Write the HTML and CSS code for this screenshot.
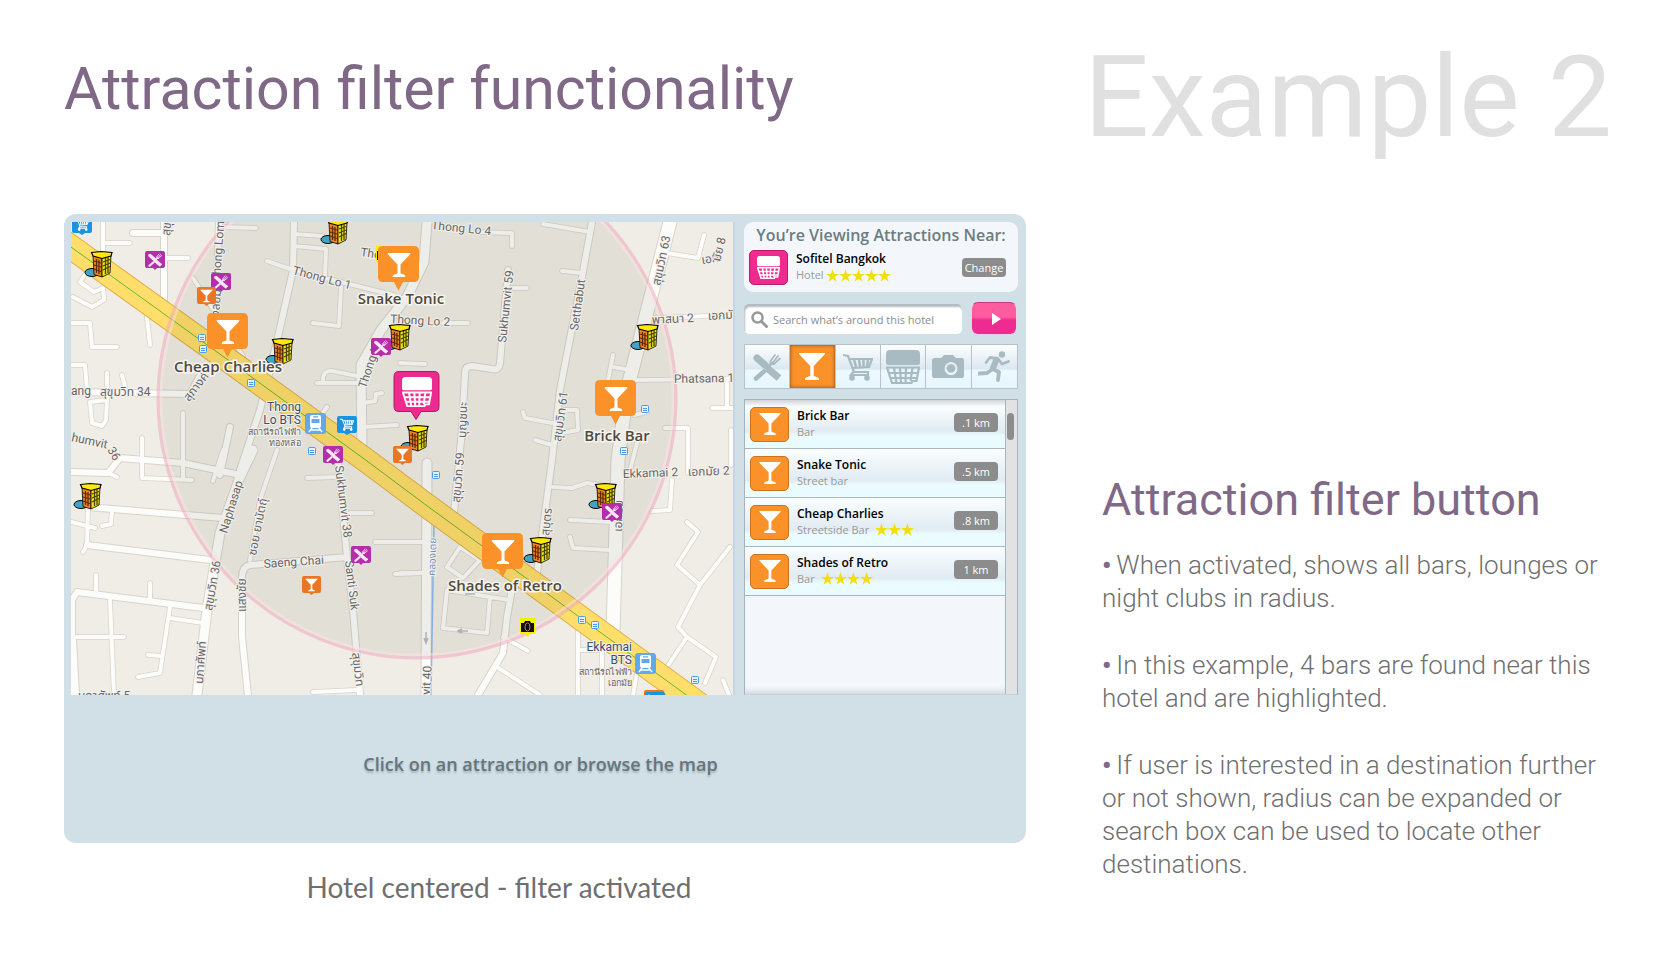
FILE: index.html
```html
<!DOCTYPE html>
<html lang="en">
<head>
<meta charset="utf-8">
<title>Attraction filter functionality</title>
<link rel="stylesheet" href="styles.css">
</head>
<body>
<svg class="defs" aria-hidden="true">
  <defs>
    <symbol id="glass" viewBox="0 0 26 27"><path fill="currentColor" d="M0 0h26v1L14.700 13v9.500c0 1.200 5.300 1.500 5.300 3.500v1H6v-1c0-2 5.300-2.300 5.300-3.500V13L0 1z"/></symbol>
    <symbol id="cutlery" viewBox="0 0 28 28"><g fill="none" stroke="currentColor" stroke-linecap="round"><path stroke-width="7" d="M4 5l8 7"/><path stroke-width="5" d="M10 11l5 4"/><path stroke-width="7" stroke-linecap="butt" d="M14 15l12 10"/><path stroke-width="4.500" d="M3 25.500l8-7"/><path stroke-width="3" d="M15 14l4-4"/><path stroke-width="1.700" d="M17.500 8l4.500-6M20 9.500l5-6.500M21 11l6-5.500M17.500 8q-1 4 3.500 3"/></g></symbol>
    <symbol id="cart" viewBox="0 0 30 28"><g fill="none" stroke="currentColor" stroke-width="2.200"><path d="M0 2l5 1 6 16h14v3H8l3-4"/><path d="M7 6h22l-3 8-16 1"/><path stroke-width="2.500" d="M11 6l2 8M16 6l1 8M20.500 6v8M25 6l-1 8"/></g><circle cx="9" cy="25" r="2.800" fill="currentColor"/><circle cx="24" cy="25" r="2.800" fill="currentColor"/></symbol>
    <symbol id="basket" viewBox="0 0 34 34"><path fill="currentColor" d="M4 0h26q4 0 4 4v9q0 2-2 2H2q-2 0-2-2V4q0-4 4-4z"/><path fill="none" stroke="currentColor" stroke-width="2.200" d="M1 17.500h32l-2.500 13.500h-4l-1 2H6L1 17.500zM2 23h30M4 28h27M8 18l2.500 15M14 18l1 15M20 18l-.5 15M26.500 18l-2 13"/></symbol>
    <symbol id="camera" viewBox="0 0 32 24"><path fill="currentColor" fill-rule="evenodd" d="M3 3h6l3-3h9l3 3h6q2 0 2 2v16q0 2-2 2H2q-2 0-2-2V5q0-2 3-2zM19 7a6.500 6.500 0 1 0 .1 0z"/><circle cx="19" cy="13.500" r="4.300" fill="currentColor"/></symbol>
    <symbol id="runner" viewBox="0 0 32 31"><circle cx="24" cy="3.500" r="3.200" fill="currentColor"/><g fill="none" stroke="currentColor" stroke-linecap="round" stroke-linejoin="round"><path stroke-width="6" d="M18.500 8.500l-3.500 8.500"/><path stroke-width="2.800" d="M18 7.500l-6-1-4 5M21 9l3 4 6.500-2.500"/><path stroke-width="3.800" d="M14.500 18l6.500 3-1 8M14 18.500l-5 3.500-8 .5"/></g></symbol>
    <symbol id="star" viewBox="0 0 20 19"><path fill="#f0df0c" d="M10 0l2.400 7.200H20l-6.200 4.500 2.400 7.300L10 14.500 3.800 19l2.400-7.300L0 7.200h7.600z"/></symbol>
    <symbol id="lens" viewBox="0 0 17 17"><circle cx="6.500" cy="6.500" r="5" fill="none" stroke="#999" stroke-width="2.500"/><path d="M10.500 10.500l5 5" stroke="#999" stroke-width="3" stroke-linecap="round"/></symbol>

    <g id="pin-bar"><path fill="#fa9129" d="M5 0h31q5 0 5 5v26q0 5-5 5H25l-4.500 8.500L16 36H5q-5 0-5-5V5q0-5 5-5z"/><use href="#glass" x="9.500" y="7" width="23" height="24" color="#fff"/></g>
    <g id="mini-bar"><path fill="#e87624" d="M2 0h15q2 0 2 2v13q0 2-2 2h-5l-2.500 2L7 17H2q-2 0-2-2V2q0-2 2-2z"/><use href="#glass" x="3" y="2.500" width="13" height="13" color="#fff"/></g>
    <g id="mini-food"><path fill="#b32ea9" d="M2 0h16q2 0 2 2v13q0 2-2 2h-6l-2 2-2-2H2q-2 0-2-2V2q0-2 2-2z"/><use href="#cutlery" x="3" y="2" width="14" height="14" color="#fbe6f8"/></g>
    <g id="mini-shop"><path fill="#1a93e0" d="M2 0h16q2 0 2 2v13q0 2-2 2h-5l-3 2-3-2H2q-2 0-2-2V2q0-2 2-2z"/><use href="#cart" x="3" y="2" width="14" height="13" color="#fff"/></g>
    <g id="train"><rect width="21" height="21" rx="3" fill="#5fa9ec"/><path fill="#fff" fill-rule="evenodd" d="M7 2h7q2 0 2 2v9q0 2-2 2H7q-2 0-2-2V4q0-2 2-2zM6.500 6v4h8V6zM8 3.300v1.200h5V3.300z"/><path d="M7 15l-3 4M14 15l3 4M6 17h9" stroke="#fff" stroke-width="1.500"/></g>
    <g id="stop"><rect x=".5" y=".5" width="7" height="7" rx="1" fill="#e4f1fc" stroke="#4a9bea"/><path d="M2 3.500h4M2 5.500h4" stroke="#4a9bea"/></g>
    <g id="hotel"><ellipse cx="7" cy="21.500" rx="7" ry="4" fill="#3fa4c6" stroke="#000"/><path fill="#f08323" stroke="#000" stroke-width=".8" d="M8 4l9 3v19l-8-2.500z"/><path fill="#eee21a" stroke="#000" stroke-width=".8" d="M17 7l9-3-1 18-8 4z"/><path fill="#ffe810" stroke="#000" stroke-width="1.200" d="M6.500 1.500L16 .5l11 1-1 3.500-9 2.500L8 5z"/><path d="M9 10l7 2M9 14l7 2M9 18l7 2.500M11.500 8v14M14 9v14" stroke="#5c2c05" stroke-width="1.300"/><path d="M18 11l7-2.500M18 15l7-3M18 19l7-3.500M20.500 7v16M23 6v16" stroke="#4a4206" stroke-width="1.300"/></g>
    <g id="photo"><path fill="#f4f000" d="M1 0h15v16h-5l-2.500 3L6 16H1z"/><path fill="#1b0710" d="M2 5h3l1-2h5l1 2h3v9H2z"/><ellipse cx="8.500" cy="9" rx="2.500" ry="4" fill="none" stroke="#888"/></g>

    <path id="lanes" d="M103 222V253M103 243H130M164 258H188M220 227L256 228M193 278L207 300 243 356M294 234L322 236M294 246L326 249 325 277M267 261L293 270 393 295M341 287L339 326 313 323M317 383H360M323 380Q323 370 332 371L357 376M363 403L375 401 376 394 382 393M363 427L397 425M71 323H90L92 347 117 347M71 365H85L87 390M147 317L150 345M107 373V400L106 420 102 426 92 423 90 402 107 400M122 375L126 390M88 270L80 282 94 292 103 288 104 300 92 307 73 297M183 413V480M142 438V478L192 480M108 473L117 477M223 450L213 481M327 407L315 423M277 450L260 500 250 560M71 522L95 528M88 508L87 545 83 552M112 510L111 524 102 526M96 575V593M150 583V600M110 600L114 695M71 637H124M170 607L160 673 138 677M170 618L203 623M148 655L162 656M307 478L337 477M350 513H372M375 542H425M313 692L357 690M395 574L427 573M480 232L512 233 512 246M543 224L590 232M562 271L582 273M513 288H527M443 323H468M400 363L425 364M667 253L698 258 704 235M655 318L733 315M633 380L733 379M613 355L608 380M613 367L630 370M523 412L525 418 552 423M563 410H577L578 430 562 433M535 440L552 445M665 428H688V473M672 480L670 510 652 511M727 383V408M712 408H733M731 430V465M634 415L647 412M637 443L630 470M553 487L572 488 587 483 600 485M570 520L610 522M570 537L573 548 610 550M687 522L698 532 677 565 700 585 730 547M700 585L678 627 687 637 716 657 705 683M687 637L667 667M460 547L480 560 463 578 447 567ZM447 590L443 628 487 633 490 597ZM490 597L510 600M503 637L528 651M497 667L540 695M578 630V695M602 650V695M578 650H603M638 667L633 695M723 680L729 695M400 542H427M400 573H427"/>
    <path id="streets" d="M133 233H163M164 222V305M219 222L216 320M294 222L293 270 278 337 260 410 240 470M71 392L190 394 202 372M230 427L220 475M71 472L108 473 120 458 183 463 240 475M88 507L223 518M87 545L210 560M72 695V600L77 592 203 608M73 640L76 695M347 557L250 565Q242 567 242 577V637L248 695M337 450L347 557 353 610 360 695M592 222L582 277 560 390 552 460 537 573M508 270L500 363Q499 371 492 369L472 366Q465 366 465 373L462 430 454 513M513 583L507 617 503 653 478 695"/>
    <path id="avenues" d="M427 222L424 262 407 297 381 330 361 365 362 450M253 450L240 477 220 533 207 610 197 695M427 463L426 695"/>
    <path id="sukhumvit63" d="M670 222L648 308 627 390 618 460 613 632"/>
    <path id="highway" d="M61 240L71 247 235 365 367 461 430 508 700 705"/>
  </defs>
</svg>

<header class="top">
  <h1>Attraction filter functionality</h1>
  <p class="example">Example 2</p>
</header>

<main class="content">
  <figure class="demo">
    <div class="app">
      <svg class="map" viewBox="71 222 662 473" role="img" aria-label="Map of attractions around the hotel">
        <rect x="71" y="222" width="662" height="473" fill="#f0ede6"/>
        <g fill="none" stroke-linecap="round" stroke-linejoin="round">
          <g stroke="#d8d4ca"><use href="#lanes" stroke-width="5.500"/><use href="#streets" stroke-width="8"/><use href="#avenues" stroke-width="11"/><use href="#sukhumvit63" stroke-width="15"/></g>
          <g stroke="#fcfcfa"><use href="#lanes" stroke-width="4"/><use href="#streets" stroke-width="6"/><use href="#avenues" stroke-width="9"/><use href="#sukhumvit63" stroke-width="13"/></g>
          <path d="M434 523L431 695" stroke="#8fb8f2" stroke-width="1.500"/>
          <use href="#highway" stroke="#e0b04a" stroke-width="25"/>
          <use href="#highway" stroke="#ffde6b" stroke-width="23"/>
          <use href="#highway" stroke="#6db52c"/>
        </g>
        <circle cx="417" cy="399" r="258" fill="#28281e" fill-opacity=".07"/>
        <circle cx="417" cy="399" r="256" fill="none" stroke="#fbe3df" stroke-opacity=".5" stroke-width="3"/>
        <circle cx="417" cy="399" r="259" fill="none" stroke="#f0a5be" stroke-opacity=".55" stroke-width="3"/>

        <g class="streets-text">
          <text transform="translate(431 229) rotate(6)">Thong Lo 4</text>
          <text transform="translate(360 256) rotate(8)">Tho</text>
          <text transform="translate(292 274) rotate(15)">Thong Lo 1</text>
          <text transform="translate(390 323) rotate(3)">Thong Lo 2</text>
          <text transform="translate(219 317) rotate(-86)">งลอม</text>
          <text transform="translate(220 282) rotate(-86)">Thong Lom</text>
          <text transform="translate(170 236) rotate(-85)">สุขุ</text>
          <text transform="translate(366 389) rotate(-72)">Thong Lo</text>
          <text transform="translate(506 343) rotate(-84)">Sukhumvit 59</text>
          <text transform="translate(578 331) rotate(-82)">Setthabut</text>
          <text transform="translate(660 286) rotate(-78)">สุขุมวิท 63</text>
          <text transform="translate(702 264) rotate(-8)">เอก</text>
          <text transform="translate(720 262) rotate(-76)">มัย 8</text>
          <text transform="translate(652 324) rotate(-3)">พาสนา 2</text>
          <text transform="translate(708 320) rotate(-3)">เอกมั</text>
          <text transform="translate(674 383) rotate(-1)">Phatsana 1</text>
          <text transform="translate(623 478) rotate(-2)">Ekkamai 2</text>
          <text transform="translate(688 476) rotate(-2)">เอกมัย 2</text>
          <text transform="translate(622 532) rotate(-88)">เอกมัย</text>
          <text transform="translate(561 442) rotate(-82)">สุขุมวิท 61</text>
          <text transform="translate(466 438) rotate(-88)">บุญชนะ</text>
          <text transform="translate(460 503) rotate(-85)">สุขุมวิท 59</text>
          <text transform="translate(549 536) rotate(-84)">สุบุตร</text>
          <text transform="translate(71 395)">ang</text>
          <text transform="translate(100 396)">สุขุมวิท 34</text>
          <text transform="translate(189 402) rotate(-52)">สุภางค์</text>
          <text transform="translate(71 441) rotate(12)">humvit</text>
          <text transform="translate(107 450) rotate(58)">36</text>
          <text transform="translate(227 534) rotate(-73)">Naphasap</text>
          <text transform="translate(256 556) rotate(-79)">ซอย ยานัตถุ์</text>
          <text transform="translate(212 611) rotate(-80)">สุขุมวิท 36</text>
          <text transform="translate(246 612) rotate(-90)">แสงชัย</text>
          <text transform="translate(203 684) rotate(-86)">นภาศัพท์</text>
          <text transform="translate(264 568) rotate(-4)">Saeng Chai</text>
          <text transform="translate(335 466) rotate(83)">Sukhumvit 38</text>
          <text transform="translate(345 561) rotate(83)">Santi Suk</text>
          <text transform="translate(352 653) rotate(83)">สุขุมวิท</text>
          <text transform="translate(430 695) rotate(-87)">vit 40</text>
          <text x="78" y="700">นภาศัพท์ 5</text>
          <text class="canal" transform="translate(435 576) rotate(-88)">คลองเตย</text>
        </g>
        <g stroke="#aeb2b6" stroke-width="1.500" fill="none"><path d="M426 632v10M424 638l2 5 2-5M468 631h-10M462 629l-4 2 4 2M465 594h10"/></g>
        <g class="stations">
          <text x="301" y="411">Thong</text><text x="301" y="424">Lo BTS</text>
          <text class="thai" x="301" y="435">สถานีรถไฟฟ้า</text><text class="thai" x="301" y="446">ทองหล่อ</text>
          <text x="632" y="651">Ekkamai</text><text x="632" y="664">BTS</text>
          <text class="thai" x="632" y="675">สถานีรถไฟฟ้า</text><text class="thai" x="632" y="686">เอกมัย</text>
        </g>

        <use href="#stop" x="198" y="334"/><use href="#stop" x="199" y="345"/><use href="#stop" x="247" y="379"/><use href="#stop" x="308" y="447"/><use href="#stop" x="641" y="405"/><use href="#stop" x="620" y="447"/><use href="#stop" x="432" y="471"/><use href="#stop" x="578" y="616"/><use href="#stop" x="591" y="621"/><use href="#stop" x="691" y="676"/>
        <use href="#train" x="305" y="413"/><use href="#train" x="635" y="653"/>
        <use href="#mini-shop" x="72" y="216"/><use href="#mini-shop" x="337" y="416"/>
        <rect x="644" y="690" width="20" height="10" rx="2" fill="#e87624"/><use href="#mini-shop" x="645" y="692"/>
        <use href="#hotel" x="85" y="251"/><use href="#hotel" x="321" y="218"/><use href="#hotel" x="266" y="338"/><use href="#hotel" x="383" y="324"/><use href="#hotel" x="631" y="324"/><use href="#hotel" x="401" y="425"/><use href="#hotel" x="74" y="483"/><use href="#hotel" x="589" y="483"/><use href="#hotel" x="524" y="537"/>
        <use href="#mini-food" x="145" y="251"/><use href="#mini-food" x="211" y="273"/><use href="#mini-food" x="371" y="338"/><use href="#mini-food" x="323" y="446"/><use href="#mini-food" x="351" y="546"/><use href="#mini-food" x="602" y="503"/>
        <use href="#mini-bar" x="197" y="287"/><use href="#mini-bar" x="302" y="576"/><use href="#mini-bar" x="393" y="446"/>
        <use href="#photo" x="519" y="618"/><use href="#photo" x="375" y="246"/>
        <use href="#pin-bar" x="207" y="313"/><use href="#pin-bar" x="378" y="246"/><use href="#pin-bar" x="595" y="380"/><use href="#pin-bar" x="482" y="533"/>
        <path fill="#ee2a8f" stroke="#b8146a" d="M399 371.500h35q5 0 5 5v30q0 5-5 5h-13l-5 8-5-8h-12q-5 0-5-5v-30q0-5 5-5z"/>
        <use href="#basket" x="402" y="377" width="30" height="30" color="#fff"/>
        <g class="places">
          <text x="401" y="304">Snake Tonic</text>
          <text x="228" y="372">Cheap Charlies</text>
          <text x="617" y="441">Brick Bar</text>
          <text x="505" y="591">Shades of Retro</text>
        </g>
      </svg>

      <section class="side">
        <div class="near">
          <h2>You’re Viewing Attractions Near:</h2>
          <div class="entry">
            <span class="tile hotel"><svg width="23" height="23"><use href="#basket"/></svg></span>
            <div class="info">
              <strong>Sofitel Bangkok</strong>
              <span class="kind">Hotel <span class="stars"><svg><use href="#star"/></svg><svg><use href="#star"/></svg><svg><use href="#star"/></svg><svg><use href="#star"/></svg><svg><use href="#star"/></svg></span></span>
            </div>
            <button class="badge" type="button">Change</button>
          </div>
        </div>
        <form class="search">
          <label class="field"><svg width="17" height="17" aria-hidden="true"><use href="#lens"/></svg><input type="text" aria-label="Search" placeholder="Search what’s around this hotel"></label>
          <button class="go" type="button" aria-label="Search"><svg width="9" height="12"><path d="M0 0l9 6-9 6z" fill="#fff"/></svg></button>
        </form>
        <nav class="filters" aria-label="Attraction filters">
          <button type="button" aria-label="Restaurants"><svg width="28" height="28"><use href="#cutlery"/></svg></button>
          <button type="button" aria-label="Bars" class="active"><svg width="26" height="27"><use href="#glass"/></svg></button>
          <button type="button" aria-label="Shopping"><svg width="30" height="28"><use href="#cart"/></svg></button>
          <button type="button" aria-label="Hotels"><svg width="34" height="34"><use href="#basket"/></svg></button>
          <button type="button" aria-label="Sights"><svg width="32" height="24"><use href="#camera"/></svg></button>
          <button type="button" aria-label="Sports"><svg width="32" height="31"><use href="#runner"/></svg></button>
        </nav>
        <div class="results">
          <ul>
            <li class="entry"><span class="tile"><svg width="22" height="22"><use href="#glass"/></svg></span><div class="info"><strong>Brick Bar</strong><span class="kind">Bar</span></div><span class="badge">.1 km</span></li>
            <li class="entry"><span class="tile"><svg width="22" height="22"><use href="#glass"/></svg></span><div class="info"><strong>Snake Tonic</strong><span class="kind">Street bar</span></div><span class="badge">.5 km</span></li>
            <li class="entry"><span class="tile"><svg width="22" height="22"><use href="#glass"/></svg></span><div class="info"><strong>Cheap Charlies</strong><span class="kind">Streetside Bar <span class="stars"><svg><use href="#star"/></svg><svg><use href="#star"/></svg><svg><use href="#star"/></svg></span></span></div><span class="badge">.8 km</span></li>
            <li class="entry"><span class="tile"><svg width="22" height="22"><use href="#glass"/></svg></span><div class="info"><strong>Shades of Retro</strong><span class="kind">Bar <span class="stars"><svg><use href="#star"/></svg><svg><use href="#star"/></svg><svg><use href="#star"/></svg><svg><use href="#star"/></svg></span></span></div><span class="badge">1 km</span></li>
          </ul>
          <div class="scroll"><div class="thumb"></div></div>
        </div>
      </section>
      <p class="hint">Click on an attraction or browse the map</p>
    </div>
    <figcaption>Hotel centered - filter activated</figcaption>
  </figure>

  <section class="notes">
    <h2>Attraction filter button</h2>
    <ul>
      <li>When activated, shows all bars, lounges or night clubs in radius.</li>
      <li>In this example, 4 bars are found near this hotel and are highlighted.</li>
      <li>If user is interested in a destination further or not shown, radius can be expanded or search box can be used to locate other destinations.</li>
    </ul>
  </section>
</main>
</body>
</html>
```

FILE: styles.css
```css
* { box-sizing: border-box; }
body { margin: 0; padding: 35px 59px 24px 64px; background: #fff; color: #6f6f6f; font-family: Roboto, sans-serif; }
h1, h2, p, ul, figure { margin: 0; padding: 0; }
ul { list-style: none; }
.defs { position: absolute; width: 0; height: 0; }

.top { display: flex; justify-content: space-between; align-items: flex-start; height: 179px; }
h1 { margin-top: 18px; font-size: 59px; line-height: 72px; font-weight: 400; color: #806887; }
.example { padding-top: 2px; font-size: 114px; line-height: 120px; font-weight: 400; color: #e0e0e0; }

.content { display: grid; grid-template-columns: 962fr 510fr; gap: 76px; align-items: start; }
.app { display: grid; grid-template-columns: 662fr 274fr; column-gap: 11px; padding: 8px 8px 0 7px; border-radius: 12px; background: #d1dfe7; }
.map { display: block; width: 100%; height: auto; overflow: hidden; box-shadow: 2px 0 0 #c5d6e2; }
.hint { grid-column: 1 / -1; padding: 58px 8px 67px 0; text-align: center; font: 600 18px/23px "Open Sans", sans-serif; color: #66757c; text-shadow: 0 2px 2px #a5b3ba; }
figcaption { padding: 28px 92px 0 0; text-align: center; font: 28px/32px Lato, sans-serif; }

.streets-text { font: 12px Roboto, "Noto Sans Thai", sans-serif; fill: #666; paint-order: stroke; stroke: #f3f1ed; stroke-width: 2px; }
.streets-text .canal { font-size: 10px; fill: #6f8fbd; }
.stations { font: 12px Roboto, sans-serif; text-anchor: end; fill: #3c4f6b; paint-order: stroke; stroke: #f3f1ed; stroke-width: 2px; }
.stations .thai { font-size: 9px; fill: #666; }
.places { font: 600 15px "Open Sans", sans-serif; text-anchor: middle; fill: #4f4a3e; paint-order: stroke; stroke: #f6f4ee; stroke-width: 3px; }

.side { display: flex; flex-direction: column; font-family: "Open Sans", sans-serif; }
.near { height: 70px; border-radius: 9px; background: #f3f7fb; }
.near h2 { padding-top: 2px; text-align: center; font-size: 16px; line-height: 23px; font-weight: 600; color: #6b7d80; white-space: nowrap; }
.near .entry { height: 41px; }
.near .badge { margin-right: 12px; }
.entry { display: flex; align-items: center; gap: 8px; padding-left: 5px; }
.tile { display: flex; align-items: center; justify-content: center; width: 39px; height: 35px; border-radius: 5px; background: #fa9129; border: 1px solid #c8741f; color: #fff; }
.tile.hotel { background: #ef2b90; border-color: #b91c6d; }
.info { flex: 1; display: flex; flex-direction: column; padding-bottom: 2px; }
.info strong { font-size: 12px; line-height: 17px; font-weight: 600; color: #000; }
.kind { display: flex; align-items: center; gap: 6px; font-size: 11px; line-height: 16px; color: #999; }
.near .kind { gap: 2px; }
.stars { display: flex; }
.stars svg { width: 13px; height: 13px; }
.badge { display: flex; align-items: center; justify-content: center; width: 44px; height: 19px; margin-bottom: 3px; padding: 0; border: 0; border-radius: 4px; background: #8c8c8c; color: #fff; font: 11px "Open Sans", sans-serif; }
.near .badge { margin-bottom: 0; }

.search { display: flex; gap: 9px; padding: 10px 1px 0 0; }
.field { flex: 1; display: flex; align-items: center; gap: 5px; height: 30px; margin-top: 2px; padding-left: 7px; border-radius: 5px; background: #fff; box-shadow: inset 1px 3px 2px #b3bbc0; }
.field input { flex: 1; min-width: 0; padding: 0; border: 0; outline: 0; background: none; font: 11px "Open Sans", sans-serif; }
.field input::placeholder { color: #8c8c8c; opacity: 1; }
.go { width: 46px; height: 33px; padding: 0; border: 1px solid #e9d0e2; border-top-color: #c8368a; border-radius: 7px; background: linear-gradient(#ff5c9f 45%, #ee2b90 55%); }
.go svg { margin-left: 4px; vertical-align: middle; }

.filters { display: grid; grid-template-columns: repeat(6, 1fr); height: 45px; margin-top: 9px; border: 1px solid #b6c3ca; }
.filters button { display: flex; align-items: center; justify-content: center; padding: 0; border: 0; border-right: 1px solid #b6c3ca; background: linear-gradient(#fcfeff, #dce8f0 55%, #ecfaff 60%, #e6f5fb); color: #a9bbc2; }
.filters button:last-child { border-right: 0; }
.filters .active { background: #fa9129; color: #fff; box-shadow: inset 0 0 3px 1px #a5672a; }

.results { flex: 1; display: flex; margin-top: 10px; border: 1px solid #a5b4bc; border-bottom-color: #c5d2d9; background: #f3f7fb; }
.results ul { flex: 1; box-shadow: inset 0 -6px 6px -4px #c9d0d6; }
.results .entry { height: 49px; padding-right: 7px; border-bottom: 1px solid #a9b7bd; background: linear-gradient(#fafeff, #e0ebf2 65%, #ebfcff 75%, #e9fbff); }
.results .entry:first-child { background: linear-gradient(#cfd4d6, #fafeff 14%, #e0ebf2 65%, #ebfcff 75%, #e9fbff); }
.scroll { width: 12px; padding: 13px 3px 0 1px; border-left: 1px solid #a9b7bd; background: #e2e2e2; }
.thumb { height: 27px; border-radius: 4px; background: #8c8c8c; }

.notes { padding-top: 261px; }
.notes h2 { margin-bottom: 24px; font-size: 45px; line-height: 50px; font-weight: 400; color: #806887; }
.notes li { margin-bottom: 34px; font-size: 26px; line-height: 33px; font-weight: 300; }
.notes li:last-child { margin-bottom: 0; }
.notes li::before { content: "•"; margin-right: 5px; font-weight: 700; color: #806887; }
```
